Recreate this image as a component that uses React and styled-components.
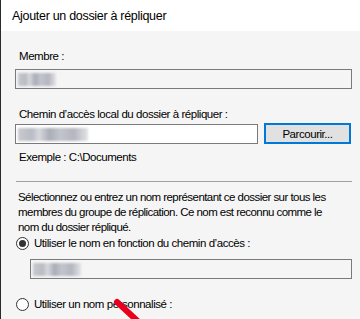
import React from "react";
import styled, { createGlobalStyle } from "styled-components";

const GlobalStyle = createGlobalStyle`
  html, body {
    margin: 0;
    padding: 0;
    background: #f5f5f5;
  }
  body {
    font-family: "Liberation Sans", Arial, sans-serif;
    font-size: 11.5px;
    letter-spacing: -0.45px;
    color: #000;
  }
`;

const Window = styled.div`
  position: relative;
  width: 360px;
  height: 319px;
  overflow: hidden;
  background: #f5f5f5;
  border-left: 1px solid #2b2b2b;
  box-sizing: border-box;
`;

const TitleBar = styled.div`
  height: 31px;
  background: #fff;
  display: flex;
  align-items: center;
  padding-left: 11px;
  font-size: 12.5px;
  letter-spacing: -0.3px;
  color: #000;
`;

const Body = styled.div`
  padding: 18px 8px 0 14px;
  display: flex;
  flex-direction: column;
`;

const Label = styled.div`
  padding-left: 4px;
  line-height: 15px;
  margin-bottom: ${(p) => p.$gap || 0}px;
`;

const Field = styled.div`
  height: 20px;
  flex: 0 0 20px;
  box-sizing: border-box;
  border: 1px solid #7a7a7a;
  background: ${(p) => (p.$readonly ? "#f5f5f5" : "#fff")};
  display: flex;
  align-items: center;
  padding-left: 2px;
  margin-left: ${(p) => p.$indent || 0}px;
`;

const PathField = styled(Field)`
  flex: 0 0 243px;
`;

const Blur = styled.div`
  width: ${(p) => p.$w}px;
  height: 13px;
  background: linear-gradient(
    90deg,
    #c9c9cf 0%,
    #b8bcc4 20%,
    #d7d9dd 30%,
    #a9adb6 45%,
    #c2c5cc 60%,
    #b3b6bf 80%,
    #e3e4e6 100%
  );
  filter: blur(1.2px);
`;

const Row = styled.div`
  display: flex;
  gap: 6px;
  align-items: flex-start;
  height: 20px;
`;

const Button = styled.button`
  width: 87px;
  height: 21px;
  box-sizing: border-box;
  border: 2px solid #0078d7;
  background: #e1e1e1;
  font-family: "Liberation Sans", Arial, sans-serif;
  font-size: 11.5px;
  letter-spacing: -0.45px;
  color: #000;
  padding: 0;
  margin-top: -1px;
`;

const Separator = styled.div`
  height: 1px;
  background: #a0a0a0;
  margin: 16px 0 8px 1px;
`;

const Paragraph = styled.p`
  margin: 0 0 0 3px;
  width: 322px;
  line-height: 15px;
  letter-spacing: -0.55px;
`;

const RadioRow = styled.label`
  display: flex;
  align-items: center;
  gap: 5px;
  height: 16px;
  padding-left: 1px;
`;

const RadioCircle = styled.span`
  width: 13px;
  height: 13px;
  box-sizing: border-box;
  border: 1px solid #333;
  border-radius: 50%;
  background: #fff;
  display: flex;
  align-items: center;
  justify-content: center;

  &::after {
    content: "";
    width: 7px;
    height: 7px;
    border-radius: 50%;
    background: #333;
    display: ${(p) => (p.$checked ? "block" : "none")};
  }
`;

const Spacer = styled.div`
  flex: 0 0 ${(p) => p.$h}px;
`;

const Annotation = styled.svg`
  position: absolute;
  left: 110px;
  top: 296px;
`;

const Radio = ({ checked, children }) => (
  <RadioRow>
    <RadioCircle $checked={checked} />
    <span>{children}</span>
  </RadioRow>
);

export default function App() {
  return (
    <>
      <GlobalStyle />
      <Window>
        <TitleBar>Ajouter un dossier à répliquer</TitleBar>
        <Body>
          <Label $gap={5}>Membre :</Label>
          <Field $readonly>
            <Blur $w={38} />
          </Field>
          <Spacer $h={18} />
          <Label $gap={2}>Chemin d’accès local du dossier à répliquer :</Label>
          <Row>
            <PathField>
              <Blur $w={70} />
            </PathField>
            <Button>Parcourir...</Button>
          </Row>
          <Spacer $h={6} />
          <Label>Exemple : C:\Documents</Label>
          <Separator />
          <Paragraph>
            Sélectionnez ou entrez un nom représentant ce dossier sur tous les
            membres du groupe de réplication. Ce nom est reconnu comme le nom du
            dossier répliqué.
          </Paragraph>
          <Radio checked>Utiliser le nom en fonction du chemin d’accès :</Radio>
          <Spacer $h={8} />
          <Field $readonly $indent={15}>
            <Blur $w={48} />
          </Field>
          <Spacer $h={17} />
          <Radio>Utiliser un nom personnalisé :</Radio>
        </Body>
        <Annotation width="40" height="30" viewBox="0 0 40 30">
          <line x1="6" y1="6" x2="32" y2="30" stroke="#e8001c" strokeWidth="6" strokeLinecap="round" />
        </Annotation>
      </Window>
    </>
  );
}
